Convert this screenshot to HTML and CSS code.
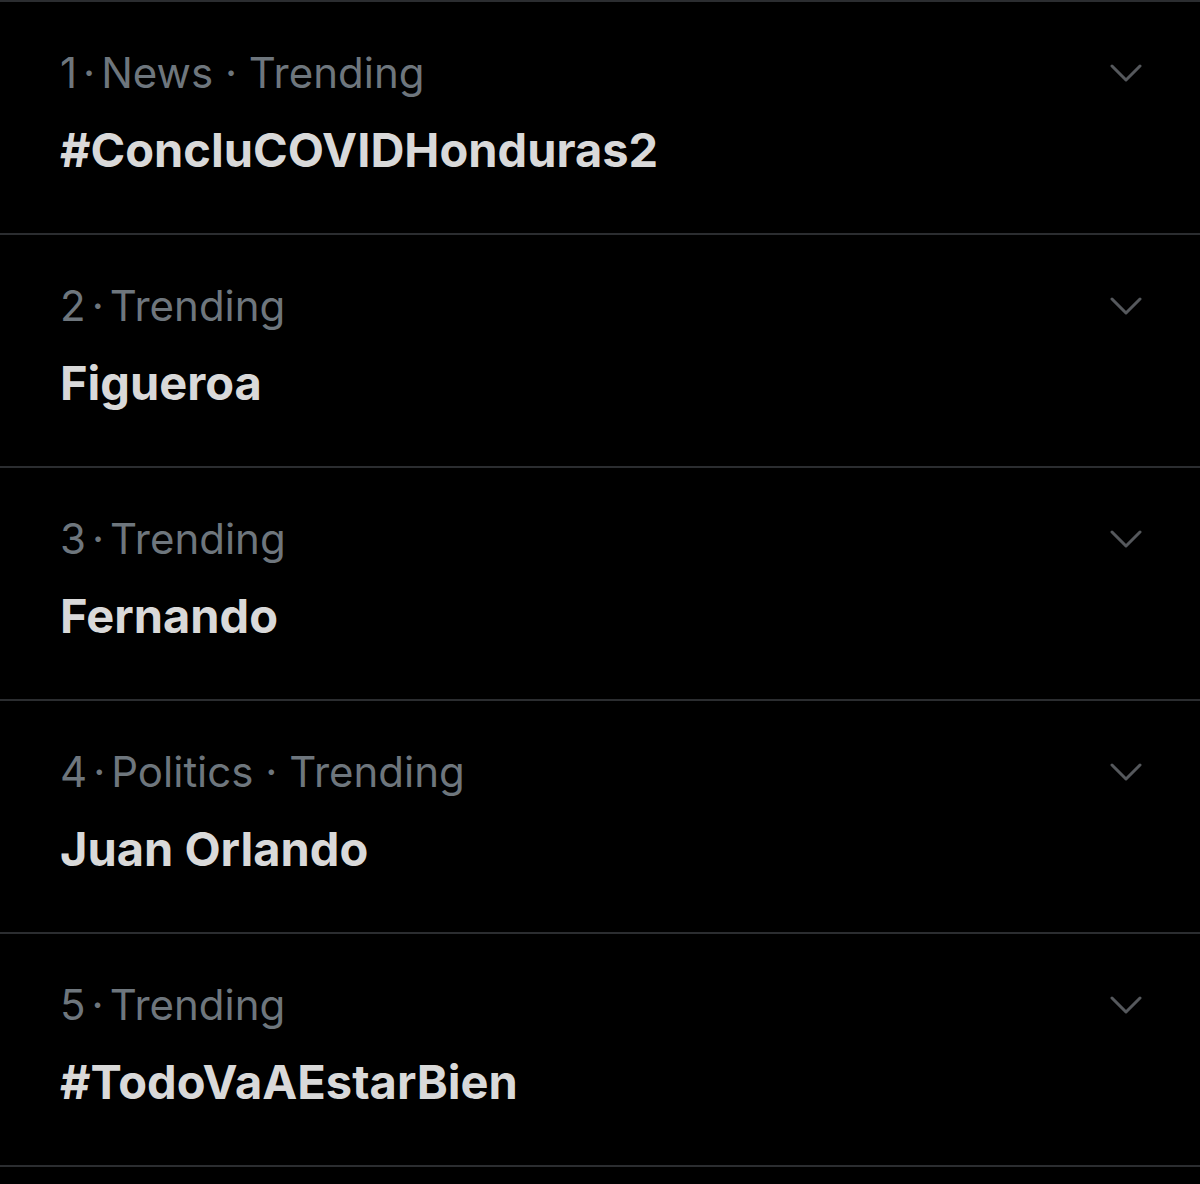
FILE: index.html
```html
<!DOCTYPE html>
<html lang="en">
  <head>
    <meta charset="UTF-8" />
    <meta name="viewport" content="width=device-width, initial-scale=1.0" />
    <title>Trending</title>
    <link rel="stylesheet" href="styles.css">
  </head>
  <body>
    <div class="trends">
      <div class="trend">
        <div class="trend-text">
          <div class="meta">1<span class="dot">·</span>News · Trending</div>
          <div class="name">#ConcluCOVIDHonduras2</div>
        </div>
        <svg class="chevron" viewBox="0 0 32 20"><path d="M2 2 L16 16 L30 2" /></svg>
      </div>
      <div class="trend">
        <div class="trend-text">
          <div class="meta">2<span class="dot">·</span>Trending</div>
          <div class="name">Figueroa</div>
        </div>
        <svg class="chevron" viewBox="0 0 32 20"><path d="M2 2 L16 16 L30 2" /></svg>
      </div>
      <div class="trend">
        <div class="trend-text">
          <div class="meta">3<span class="dot">·</span>Trending</div>
          <div class="name">Fernando</div>
        </div>
        <svg class="chevron" viewBox="0 0 32 20"><path d="M2 2 L16 16 L30 2" /></svg>
      </div>
      <div class="trend">
        <div class="trend-text">
          <div class="meta">4<span class="dot">·</span>Politics · Trending</div>
          <div class="name">Juan Orlando</div>
        </div>
        <svg class="chevron" viewBox="0 0 32 20"><path d="M2 2 L16 16 L30 2" /></svg>
      </div>
      <div class="trend">
        <div class="trend-text">
          <div class="meta">5<span class="dot">·</span>Trending</div>
          <div class="name">#TodoVaAEstarBien</div>
        </div>
        <svg class="chevron" viewBox="0 0 32 20"><path d="M2 2 L16 16 L30 2" /></svg>
      </div>
    </div>
  </body>
</html>
```

FILE: styles.css
```css
body {
  margin: 0;
  background: #000;
  font-family: Inter, "Noto Sans", sans-serif;
}

.trends {
  border-top: 2px solid #2b2d30;
}

.trend {
  display: flex;
  justify-content: space-between;
  align-items: flex-start;
  height: 231px;
  padding: 0 58px 0 60px;
  border-bottom: 2px solid #2b2d30;
}

.trend-text {
  padding-top: 46px;
}

.meta {
  font-size: 42px;
  line-height: 50px;
  color: #6e767d;
}

.meta .dot {
  margin: 0 6px;
}

.name {
  margin-top: 24px;
  font-size: 47px;
  line-height: 56px;
  font-weight: 700;
  color: #d9d9d9;
}

.chevron {
  width: 32px;
  height: 20px;
  margin-top: 62px;
}

.chevron path {
  fill: none;
  stroke: #55585c;
  stroke-width: 3;
  stroke-linecap: round;
  stroke-linejoin: round;
}
```
